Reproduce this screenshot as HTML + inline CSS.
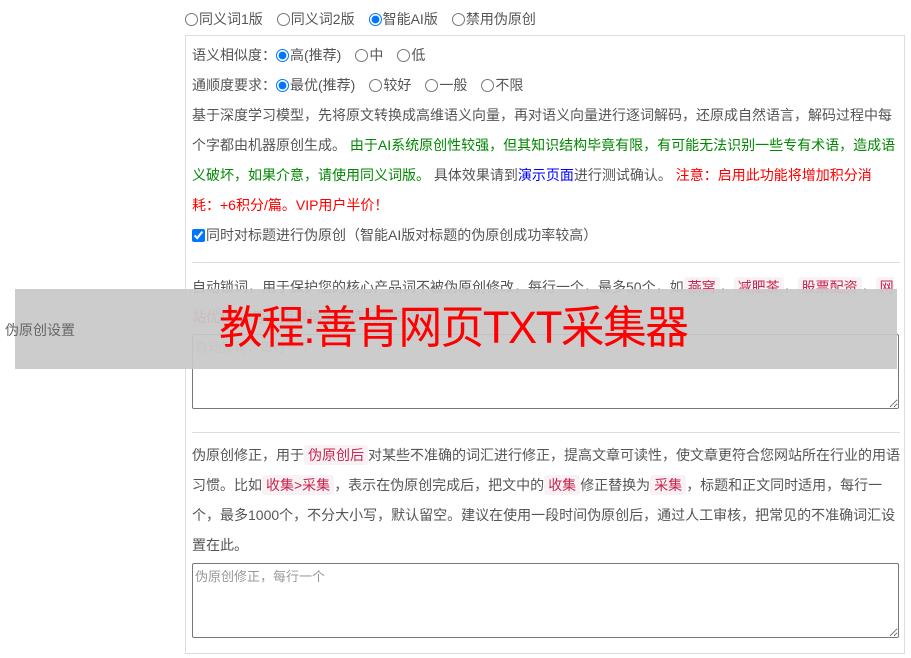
<!DOCTYPE html>
<html><head><meta charset="utf-8"><style>
body{margin:0;width:911px;height:658px;overflow:hidden;background:#fff;font-family:"Liberation Sans","Noto Sans CJK SC",sans-serif;font-size:14px;color:#555;position:relative}
.a{position:absolute;white-space:nowrap}
input{margin:0 1px 0 0;vertical-align:-2px;width:13px;height:13px}
.box{position:absolute;left:185px;top:35px;width:720px;height:619px;border:1px solid #ddd;box-sizing:border-box}
.p{position:absolute;left:192px;width:704px;line-height:30px}
.hr{position:absolute;left:192px;width:708px;height:1px;background:#ddd}
code{font-family:inherit;color:#c7254e;background:#f9f2f4;padding:2px 4px;border-radius:3px}
textarea{position:absolute;left:192px;width:707px;border:1px solid #777;box-sizing:border-box;border-radius:2px;font-family:inherit;font-size:13px;color:#999;padding:2px 2px;resize:both}
.g{color:#080}.r{color:#f00}.b{color:#00f}
.sp{margin-right:14px}
.c{font-family:"Noto Sans CJK SC",sans-serif}
</style></head><body>
<div class="a" style="left:185px;top:9px;line-height:20px"><span class="sp"><input type="radio">同义词1版</span><span class="sp"><input type="radio">同义词2版</span><span class="sp"><input type="radio" checked>智能AI版</span><span><input type="radio">禁用伪原创</span></div>
<div class="box"></div>
<div class="p" style="top:40px">语义相似度<span class="c">：</span><span class="sp"><input type="radio" checked>高(推荐)</span><span class="sp"><input type="radio">中</span><span><input type="radio">低</span></div>
<div class="p" style="top:70px">通顺度要求<span class="c">：</span><span class="sp"><input type="radio" checked>最优(推荐)</span><span class="sp"><input type="radio">较好</span><span class="sp"><input type="radio">一般</span><span><input type="radio">不限</span></div>
<div class="p" style="top:100px">基于深度学习模型，先将原文转换成高维语义向量，再对语义向量进行逐词解码，还原成自然语言，解码过程中每个字都由机器原创生成。 <span class="g">由于AI系统原创性较强，但其知识结构毕竟有限，有可能无法识别一些专有术语，造成语义破坏，如果介意，请使用同义词版。</span> 具体效果请到<span class="b">演示页面</span>进行测试确认。 <span class="r">注意<span class="c">：</span>启用此功能将增加积分消耗<span class="c">：</span>+6积分/篇。VIP用户半价！</span></div>
<div class="p" style="top:220px"><input type="checkbox" checked>同时对标题进行伪原创（智能AI版对标题的伪原创成功率较高）</div>
<div class="hr" style="top:262px"></div>
<div class="p" style="top:272px">自动锁词，用于保护您的核心产品词不被伪原创修改，每行一个，最多50个，如<code>燕窝</code>，<code>减肥茶</code>，<code>股票配资</code>，<code>网站优化</code>等等，用根据实际情况酌情增留</div>
<textarea style="top:334px;height:75px">自动锁词，每行一个</textarea>
<div class="hr" style="top:432px"></div>
<div class="p" style="top:440px;width:712px">伪原创修正，用于<code>伪原创后</code>对某些不准确的词汇进行修正，提高文章可读性，使文章更符合您网站所在行业的用语习惯。比如<code>收集&gt;采集</code>，表示在伪原创完成后，把文中的<code>收集</code>修正替换为<code>采集</code>，标题和正文同时适用，每行一个，最多1000个，不分大小写，默认留空。建议在使用一段时间伪原创后，通过人工审核，把常见的不准确词汇设置在此。</div>
<textarea style="top:563px;height:75px">伪原创修正，每行一个</textarea>
<div class="a" style="left:15px;top:289px;width:882px;height:80px;background:rgba(200,200,200,0.93)"></div>
<div class="a" style="left:5px;top:320px;color:#666">伪原创设置</div>
<div class="a" style="left:219px;top:301px;font-size:45px;line-height:54px;color:#f00;letter-spacing:-1.5px;transform:scaleX(0.97);transform-origin:left">教程:善肯网页TXT采集器</div>
</body></html>
